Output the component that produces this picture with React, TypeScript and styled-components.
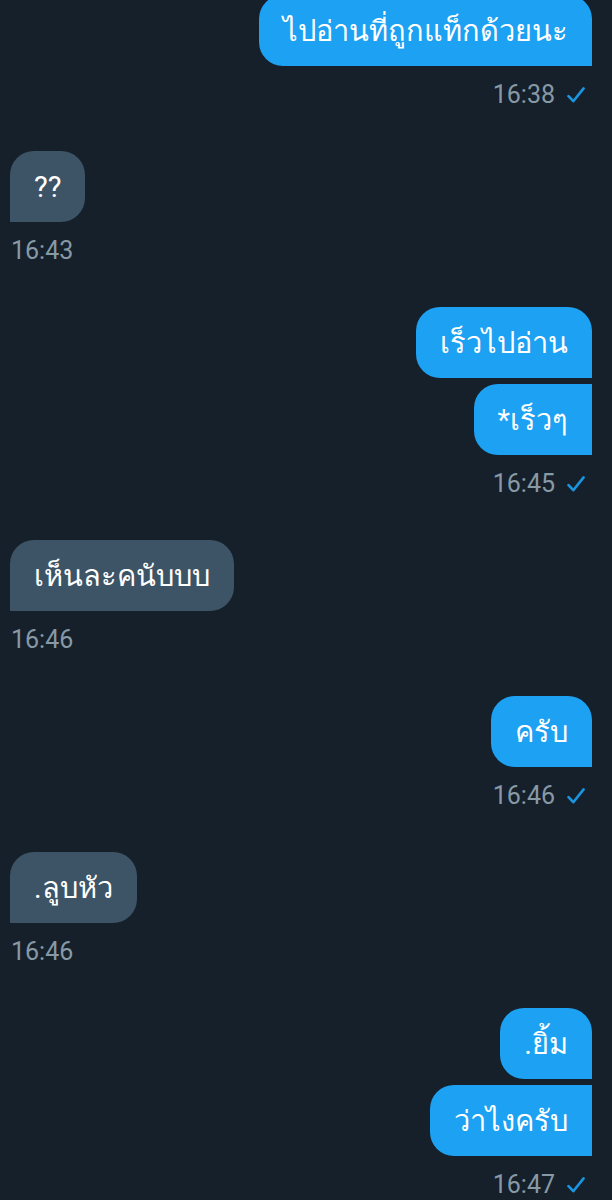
import styled, { createGlobalStyle } from "styled-components";

const GlobalStyle = createGlobalStyle`
  html, body {
    margin: 0;
    padding: 0;
    background: #15202b;
  }
  body {
    font-family: Roboto, "Noto Sans", sans-serif;
    -webkit-font-smoothing: antialiased;
  }
`;

type Msg = { text: string };
type Group = { id: number; mine: boolean; time: string; messages: Msg[] };

const groups: Group[] = [
  { id: 1, mine: true, time: "16:38", messages: [{ text: "ไปอ่านที่ถูกแท็กด้วยนะ" }] },
  { id: 2, mine: false, time: "16:43", messages: [{ text: "??" }] },
  { id: 3, mine: true, time: "16:45", messages: [{ text: "เร็วไปอ่าน" }, { text: "*เร็วๆ" }] },
  { id: 4, mine: false, time: "16:46", messages: [{ text: "เห็นละคนับบบ" }] },
  { id: 5, mine: true, time: "16:46", messages: [{ text: "ครับ" }] },
  { id: 6, mine: false, time: "16:46", messages: [{ text: ".ลูบหัว" }] },
  { id: 7, mine: true, time: "16:47", messages: [{ text: ".ยิ้ม" }, { text: "ว่าไงครับ" }] },
];

const Screen = styled.main`
  width: 612px;
  height: 1200px;
  overflow: hidden;
  background: #15202b;
  box-sizing: border-box;
  padding: 0 20px 0 10px;
`;

const Thread = styled.div`
  display: flex;
  flex-direction: column;
  gap: 41px;
  margin-top: -5px;
`;

const GroupBox = styled.section<{ mine: boolean }>`
  display: flex;
  flex-direction: column;
  align-items: ${(p) => (p.mine ? "flex-end" : "flex-start")};
  gap: 6px;
`;

const Bubble = styled.div<{ mine: boolean; first: boolean }>`
  box-sizing: border-box;
  height: 71px;
  display: flex;
  align-items: center;
  padding: 0 24px;
  font-size: 29px;
  line-height: 34px;
  color: #ffffff;
  white-space: nowrap;
  background: ${(p) => (p.mine ? "#1da1f2" : "#3d5466")};
  border-radius: ${(p) =>
    p.mine
      ? p.first
        ? "24px 24px 0 24px"
        : "24px 0 0 24px"
      : p.first
        ? "24px 24px 24px 0"
        : "0 24px 24px 0"};
`;

const Meta = styled.div<{ mine: boolean }>`
  display: flex;
  align-items: center;
  gap: 12px;
  margin-top: 8px;
  padding: ${(p) => (p.mine ? "0 7px 0 0" : "0 0 0 1px")};
  font-size: 25px;
  line-height: 30px;
  color: #8899a6;
`;

const Check = () => (
  <svg width="18" height="18" viewBox="0 0 18 18" fill="none">
    <path
      d="M1.5 10.2 L6.3 15.2 L16.6 2.4"
      stroke="#1b95e0"
      strokeWidth="2.6"
      strokeLinecap="round"
      strokeLinejoin="round"
    />
  </svg>
);

export default function App() {
  return (
    <>
      <GlobalStyle />
      <Screen>
        <Thread>
          {groups.map((g) => (
            <GroupBox key={g.id} mine={g.mine}>
              {g.messages.map((m, i) => (
                <Bubble key={i} mine={g.mine} first={i === 0}>
                  {m.text}
                </Bubble>
              ))}
              <Meta mine={g.mine}>
                <span>{g.time}</span>
                {g.mine && <Check />}
              </Meta>
            </GroupBox>
          ))}
        </Thread>
      </Screen>
    </>
  );
}
